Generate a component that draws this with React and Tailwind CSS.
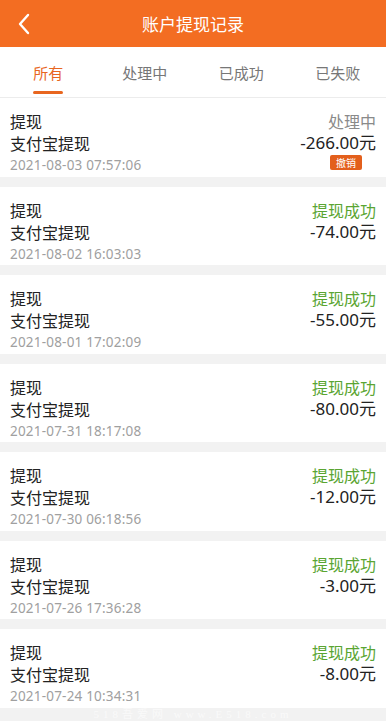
import React from "react";

const rows = [
  { date: "2021-08-03 07:57:06", amt: "-266.00元", pending: true },
  { date: "2021-08-02 16:03:03", amt: "-74.00元" },
  { date: "2021-08-01 17:02:09", amt: "-55.00元" },
  { date: "2021-07-31 18:17:08", amt: "-80.00元" },
  { date: "2021-07-30 06:18:56", amt: "-12.00元" },
  { date: "2021-07-26 17:36:28", amt: "-3.00元" },
  { date: "2021-07-24 10:34:31", amt: "-8.00元" },
];

export default function App() {
  return (
    <div
      className="w-[386px] h-[721px] overflow-hidden bg-[#f2f2f2] flex flex-col"
      style={{ fontFamily: '"Noto Sans CJK SC", "Noto Sans", sans-serif' }}
    >
      <div className="h-[47px] bg-[#f36d22] flex items-center relative shrink-0">
        <svg className="absolute left-[17px] top-[13px]" width="14" height="22" viewBox="0 0 14 22">
          <path d="M11 2 L3 11 L11 20" fill="none" stroke="#fff" strokeWidth="2.4" strokeLinecap="round" strokeLinejoin="round" />
        </svg>
        <div className="flex-1 text-center text-white text-[17px] leading-none">账户提现记录</div>
      </div>
      <div className="h-[51px] bg-white border-b border-[#ececec] grid grid-cols-4 shrink-0">
        {["所有", "处理中", "已成功", "已失败"].map((t, i) => (
          <div key={t} className="relative flex items-center justify-center">
            <span className={`text-[15px] leading-none mt-[1px] ${i === 0 ? "text-[#e8661f]" : "text-[#777]"}`}>{t}</span>
            {i === 0 && <div className="absolute bottom-[3px] left-[33px] w-[30px] h-[3px] rounded-full bg-[#e8661f]" />}
          </div>
        ))}
      </div>
      <div className="flex flex-col gap-[10px] shrink-0">
        {rows.map((r, i) => (
          <div key={i} className="bg-white h-[78.5px] shrink-0 px-[10px] pt-[12px] flex justify-between">
            <div className="flex flex-col">
              <div className="text-[16px] leading-[22px] text-[#222]">提现</div>
              <div className="text-[16px] leading-[22px] text-[#222]">支付宝提现</div>
              <div
                className="text-[13.5px] leading-[22px] text-[#a0a0a0] tracking-[0.2px]"
                style={{ fontFamily: '"Noto Sans", "Noto Sans CJK SC", sans-serif' }}
              >
                {r.date}
              </div>
            </div>
            <div className="flex flex-col items-end">
              {r.pending ? (
                <div className="text-[16px] leading-[22px] text-[#8a8a8a]">处理中</div>
              ) : (
                <div className="text-[16px] leading-[22px] text-[#5aa532]">提现成功</div>
              )}
              <div
                className="text-[17px] leading-[22px] text-[#222]"
                style={{ fontFamily: '"Noto Sans", "Noto Sans CJK SC", sans-serif' }}
              >
                {r.amt}
              </div>
              {r.pending && (
                <div className="mt-[1px] mr-[14px] h-[15px] px-[6px] rounded-[2px] bg-[#e35f1c] text-white text-[10px] leading-[15px]">撤销</div>
              )}
            </div>
          </div>
        ))}
      </div>
      <div className="flex-1 flex items-center justify-center">
        <div className="text-white/60 text-[11px] tracking-[4px] leading-none" style={{ fontFamily: '"Liberation Serif", "Noto Sans CJK SC", serif' }}>
          518吾爱网 www.E518.com
        </div>
      </div>
    </div>
  );
}
